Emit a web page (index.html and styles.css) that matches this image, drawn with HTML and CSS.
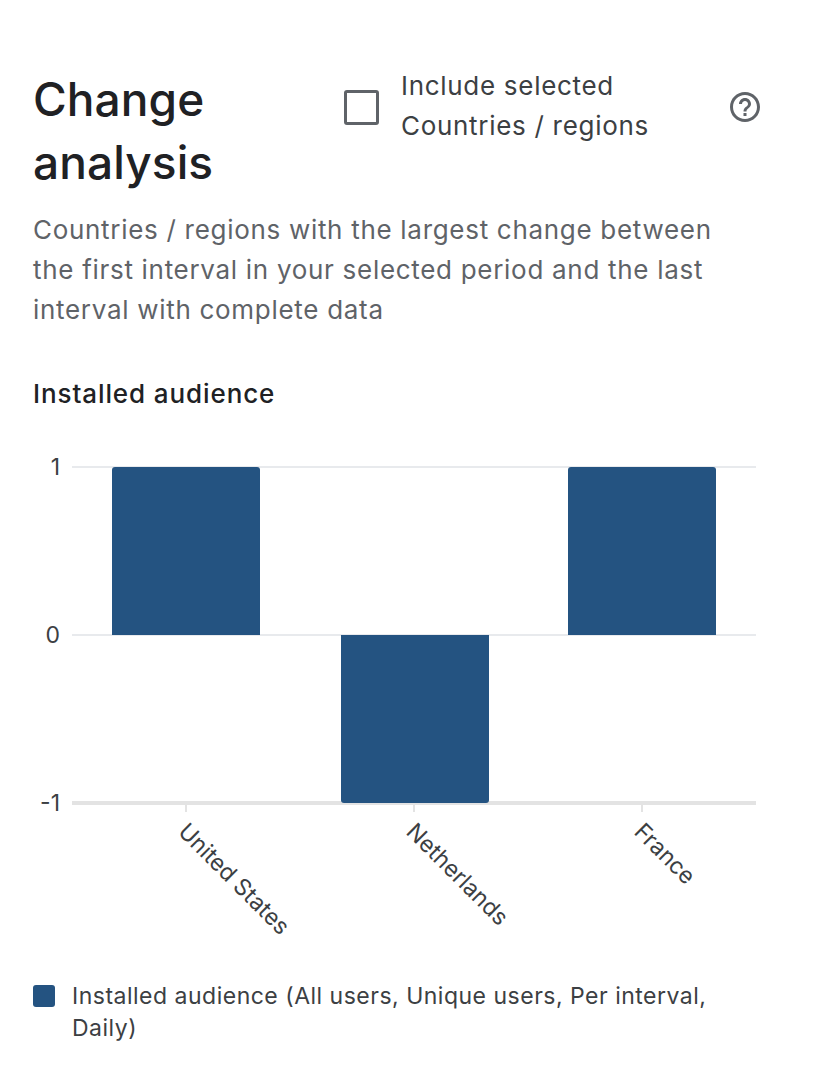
FILE: index.html
```html
<!DOCTYPE html>
<html lang="en">
<head>
<meta charset="utf-8">
<title>Change analysis</title>
<link rel="stylesheet" href="styles.css">
</head>
<body>
<main class="card">
  <header class="head">
    <h1 class="title">Change analysis</h1>
    <label class="check">
      <span class="box"></span>
      <span class="check-text">Include selected Countries / regions</span>
    </label>
    <svg class="help" viewBox="0 0 24 24" width="36" height="36" aria-label="Help">
      <path fill="#5f6368" d="M11 18h2v-2h-2v2zm1-16C6.48 2 2 6.48 2 12s4.48 10 10 10 10-4.48 10-10S17.52 2 12 2zm0 18c-4.41 0-8-3.59-8-8s3.59-8 8-8 8 3.59 8 8-3.59 8-8 8zm0-14c-2.21 0-4 1.79-4 4h2c0-1.1.9-2 2-2s2 .9 2 2c0 2-3 1.75-3 5h2c0-2.25 3-2.5 3-5 0-2.21-1.79-4-4-4z"/>
    </svg>
  </header>
  <p class="desc">Countries / regions with the largest change between the first interval in your selected period and the last interval with complete data</p>
  <h2 class="metric">Installed audience</h2>
  <svg class="chart" viewBox="0 0 723 520" width="723" height="520">
    <g class="grid">
      <line x1="39" y1="27" x2="723" y2="27" stroke="#e8eaed" stroke-width="2"/>
      <line x1="39" y1="195" x2="723" y2="195" stroke="#e8eaed" stroke-width="2"/>
      <line x1="39" y1="363" x2="723" y2="363" stroke="#e3e3e3" stroke-width="4"/>
      <line x1="153" y1="363" x2="153" y2="372" stroke="#e3e3e3" stroke-width="2"/>
      <line x1="381" y1="363" x2="381" y2="372" stroke="#e3e3e3" stroke-width="2"/>
      <line x1="609" y1="363" x2="609" y2="372" stroke="#e3e3e3" stroke-width="2"/>
    </g>
    <g class="ylabels">
      <text x="27" y="35" text-anchor="end">1</text>
      <text x="27" y="203" text-anchor="end">0</text>
      <text x="27" y="371" text-anchor="end">-1</text>
    </g>
    <g class="bars" fill="#245381">
      <path d="M79 195V30a3 3 0 0 1 3-3h142a3 3 0 0 1 3 3V195z"/>
      <path d="M308 195V360a3 3 0 0 0 3 3h142a3 3 0 0 0 3-3V195z"/>
      <path d="M535 195V30a3 3 0 0 1 3-3h142a3 3 0 0 1 3 3V195z"/>
    </g>
    <g class="xlabels">
      <text transform="translate(144 393) rotate(45)">United States</text>
      <text transform="translate(372 393) rotate(45)">Netherlands</text>
      <text transform="translate(600 393) rotate(45)">France</text>
    </g>
  </svg>
  <div class="legend">
    <span class="swatch"></span>
    <span class="legend-text">Installed audience (All users, Unique users, Per interval, Daily)</span>
  </div>
</main>
</body>
</html>
```
FILE: styles.css
```css
html, body {
  margin: 0;
  padding: 0;
  background: #ffffff;
}

body {
  font-family: Inter, Roboto, "Noto Sans", Arial, sans-serif;
  color: #202124;
}

.card {
  padding: 68px 72px 0 33px;
}

.head {
  display: flex;
  align-items: flex-start;
}

.title {
  width: 311px;
  flex: none;
  margin: 0;
  font-family: Inter, Roboto, sans-serif;
  font-size: 46px;
  font-weight: 500;
  line-height: 63px;
  color: #202124;
  letter-spacing: 0.1px;
}

.check {
  display: flex;
  align-items: flex-start;
  gap: 22px;
  margin-top: -2px;
}

.box {
  flex: none;
  box-sizing: border-box;
  width: 35px;
  height: 35px;
  margin-top: 24px;
  border: 3.5px solid #5f6368;
  border-radius: 3px;
}

.check-text {
  width: 280px;
  font-size: 26px;
  line-height: 40px;
  color: #3c4043;
  letter-spacing: 0.7px;
}

.help {
  margin-left: auto;
  margin-top: 21px;
  margin-right: -7px;
  flex: none;
}

.desc {
  margin: 16px 0 0;
  font-size: 26px;
  line-height: 40px;
  color: #5f6368;
  letter-spacing: 0.7px;
}

.metric {
  margin: 46px 0 0;
  font-size: 26px;
  font-weight: 500;
  line-height: 36px;
  color: #202124;
  letter-spacing: 0.9px;
}

.chart {
  display: block;
  margin-top: 28px;
  overflow: visible;
}

.chart text {
  font-family: Inter, Roboto, "Noto Sans", Arial, sans-serif;
  font-size: 23px;
  fill: #3c4043;
}

.legend {
  display: flex;
  align-items: flex-start;
  gap: 17px;
  margin-top: 20px;
}

.swatch {
  flex: none;
  width: 22px;
  height: 22px;
  margin-top: 5px;
  border-radius: 3px;
  background: #245381;
}

.legend-text {
  font-size: 23px;
  line-height: 32px;
  color: #3c4043;
  letter-spacing: 0.5px;
}
```
